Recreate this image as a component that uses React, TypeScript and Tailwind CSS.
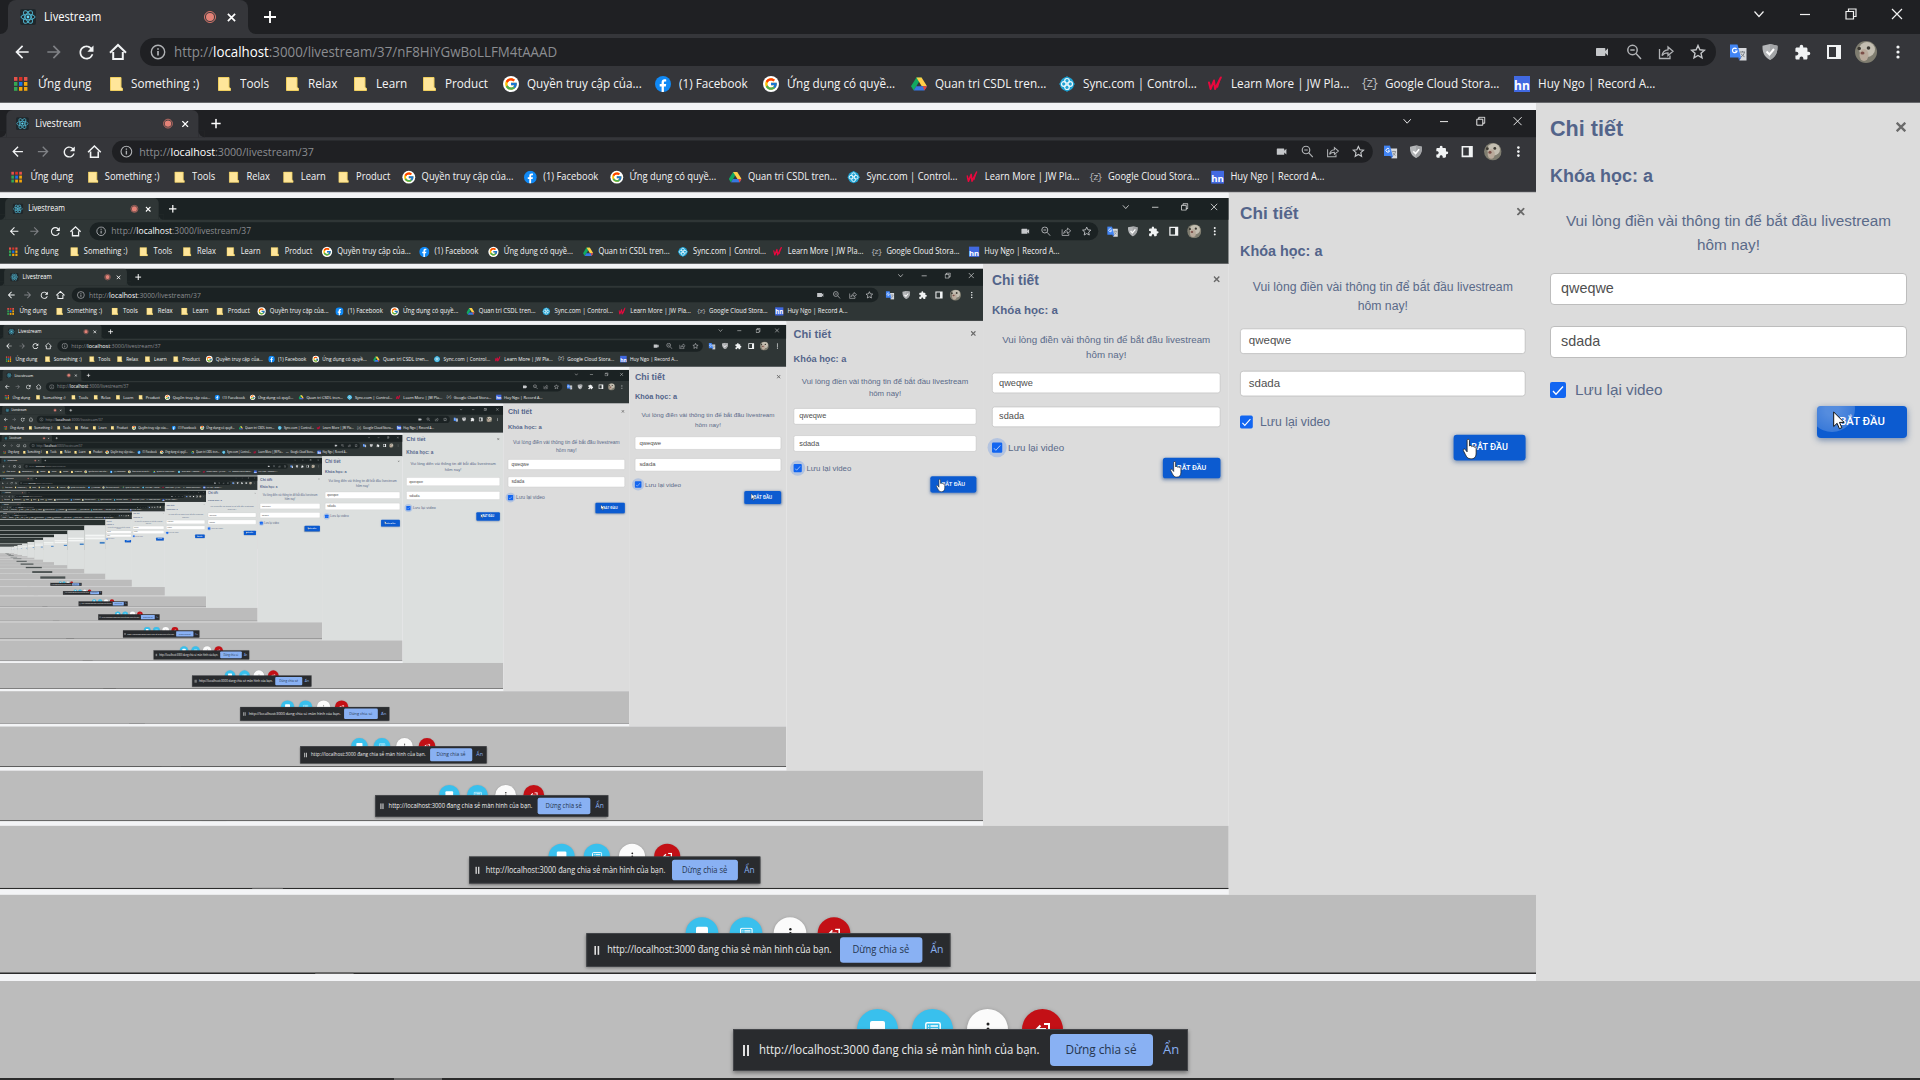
import React from "react";
import { FcGoogle } from "react-icons/fc";
import { MdExtension, MdVideocam, MdArrowBack, MdArrowForward, MdRefresh } from "react-icons/md";

const DETAILED_LEVELS = 12;
const LAST_LEVEL = 22;

const ReactLogo = () => (
  <span className="flex size-4 items-center justify-center rounded-[2px] bg-[#20272b]">
    <svg viewBox="0 0 16 16" className="size-4" fill="none" stroke="#4fb3cd" strokeWidth="1">
      <ellipse cx="8" cy="8" rx="7" ry="2.8" />
      <ellipse cx="8" cy="8" rx="7" ry="2.8" transform="rotate(60 8 8)" />
      <ellipse cx="8" cy="8" rx="7" ry="2.8" transform="rotate(120 8 8)" />
      <circle cx="8" cy="8" r="1.4" fill="#61dafb" stroke="none" />
    </svg>
  </span>
);

const AppsIcon = () => (
  <svg viewBox="0 0 14 14" className="h-[14px] w-[14px]">
    {["#e5534b", "#d93025", "#e5534b", "#34a853", "#1a73e8", "#f2a60c", "#34a853", "#f2a60c", "#f2a60c"].map((c, i) => (
      <rect key={i} x={(i % 3) * 5} y={Math.floor(i / 3) * 5} width="3.4" height="3.8" fill={c} />
    ))}
  </svg>
);

const Folder = () => (
  <svg viewBox="0 0 13 14" className="h-[14px] w-[13px]">
    <path d="M0.5 0.5h10.5v10l1.5 0.8v2.2h-12z" fill="#ffe69a" stroke="#f0cf5e" strokeWidth="1" />
  </svg>
);

const Facebook = () => (
  <svg viewBox="0 0 16 16" className="size-4">
    <circle cx="8" cy="8" r="8" fill="#1089f5" />
    <path d="M8.9 16v-5.6h1.9l.4-2.3H8.9V6.7c0-.7.3-1.2 1.3-1.2h1V3.4c-.2 0-.9-.1-1.6-.1-1.8 0-3 1-3 3v1.8H4.7v2.3h1.9V16z" fill="#fff" />
  </svg>
);

const GoogleG = () => (
  <span className="flex size-4 items-center justify-center rounded-full bg-white">
    <FcGoogle className="size-[14px]" />
  </span>
);

const Drive = () => (
  <svg viewBox="0 0 16 14" className="h-[14px] w-4">
    <path d="M5.4 0.5h5.2L5.2 9.6 2.7 13.5 0 9.3z" fill="#11a861" />
    <path d="M5.4 0.5h5.2L16 9.3h-5.2z" fill="#ffcf48" />
    <path d="M5.2 9.3H16l-2.6 4.2H2.7z" fill="#3777e3" />
    <path d="M11.8 9.3H16l-2.6 4.2z" fill="#ea4335" />
  </svg>
);

const Sync = () => (
  <svg viewBox="0 0 16 16" className="size-4">
    <path d="M8 0 16 8 8 16 0 8z" fill="#1fa3d4" />
    <circle cx="8" cy="8" r="7" fill="#1fa3d4" />
    <g fill="none" stroke="#e9f7fc" strokeWidth="1.2">
      <circle cx="8" cy="4.8" r="2.3" />
      <circle cx="8" cy="11.2" r="2.3" />
      <circle cx="4.8" cy="8" r="2.3" />
      <circle cx="11.2" cy="8" r="2.3" />
    </g>
  </svg>
);

const JW = () => (
  <svg viewBox="0 0 14 16" className="h-4 w-[14px]" fill="none" stroke="#e8083e" strokeWidth="2" strokeLinejoin="round" strokeLinecap="round">
    <path d="M1 6.5 2.6 13 6 4.5 7 13 12.8 1.5" />
    <path d="M11.5 4 9.5 11" strokeWidth="1.4" />
  </svg>
);

const Zed = () => <span className="font-['Liberation_Mono'] text-[12px] leading-none tracking-[-2px] text-[#b9babd]">{"{z}"}</span>;

const Hn = () => (
  <span className="flex h-4 w-4 items-end justify-center bg-[#4169e1] font-['Open_Sans'] text-[12px] font-bold leading-[12px] text-white">hn</span>
);

const bookmarks: { w: string; gap: string; t: string; icon: React.ReactNode }[] = [
  { w: "w-[96px]", gap: "w-[24px]", t: "Ứng dụng", icon: <AppsIcon /> },
  { w: "w-[108px]", gap: "w-[21px]", t: "Something :)", icon: <Folder /> },
  { w: "w-[68px]", gap: "w-[22px]", t: "Tools", icon: <Folder /> },
  { w: "w-[68px]", gap: "w-[22px]", t: "Relax", icon: <Folder /> },
  { w: "w-[69px]", gap: "w-[22px]", t: "Learn", icon: <Folder /> },
  { w: "w-[80px]", gap: "w-[22px]", t: "Product", icon: <Folder /> },
  { w: "w-[152px]", gap: "w-[24px]", t: "Quyền truy cập của...", icon: <GoogleG /> },
  { w: "w-[108px]", gap: "w-[24px]", t: "(1) Facebook", icon: <Facebook /> },
  { w: "w-[148px]", gap: "w-[24px]", t: "Ứng dụng có quyề...", icon: <GoogleG /> },
  { w: "w-[148px]", gap: "w-[24px]", t: "Quan tri CSDL tren...", icon: <Drive /> },
  { w: "w-[149px]", gap: "w-[24px]", t: "Sync.com | Control...", icon: <Sync /> },
  { w: "w-[153px]", gap: "w-[23px]", t: "Learn More | JW Pla...", icon: <JW /> },
  { w: "w-[153px]", gap: "w-[24px]", t: "Google Cloud Stora...", icon: <Zed /> },
  { w: "w-[150px]", gap: "w-[24px]", t: "Huy Ngo | Record A...", icon: <Hn /> },
];

const Cell = ({ children }: { children: React.ReactNode }) => (
  <span className="flex h-8 w-8 shrink-0 items-center justify-center">{children}</span>
);

const TabStrip = ({ deep }: { deep: boolean }) => (
  <div className={`flex h-[34px] items-end ${deep ? "bg-[#1b2223]" : "bg-[#1f2023]"}`}>
    <div className={`h-2 w-2 ${deep ? "bg-[#2f3636]" : "bg-[#35363a]"}`}>
      <div className={`h-2 w-2 rounded-br-lg ${deep ? "bg-[#1b2223]" : "bg-[#1f2023]"}`} />
    </div>
    <div className={`flex h-[34px] w-[240px] items-center rounded-t-lg pl-3 ${deep ? "bg-[#2f3636]" : "bg-[#35363a]"}`}>
      <ReactLogo />
      <span className="ml-2 w-[160px] shrink-0 text-[13px] text-white">
        <span className="inline-block origin-left scale-x-[0.86]">Livestream</span>
      </span>
      <span className="mr-[11px] flex size-[12px] shrink-0 items-center justify-center rounded-full border border-[#d9776c]">
        <span className="size-2 rounded-full bg-[#e38277]" />
      </span>
      <svg viewBox="0 0 10 10" className="size-[9px]" stroke="#fff" strokeWidth="1.9">
        <path d="M1 1l8 8M9 1l-8 8" />
      </svg>
    </div>
    <div className={`h-2 w-2 ${deep ? "bg-[#2f3636]" : "bg-[#35363a]"}`}>
      <div className={`h-2 w-2 rounded-bl-lg ${deep ? "bg-[#1b2223]" : "bg-[#1f2023]"}`} />
    </div>
    <div className="flex h-[34px] w-7 items-center justify-center">
      <svg viewBox="0 0 12 12" className="size-3" stroke="#fff" strokeWidth="1.9">
        <path d="M6 0v12M0 6h12" />
      </svg>
    </div>
    <div className="ml-auto flex h-[34px] items-start pt-[6px]">
      {[
        <svg key="a" viewBox="0 0 12 12" className="size-3"><path d="M1.500 3.500l4.500 5 4.500-5" /></svg>,
        <svg key="b" viewBox="0 0 12 12" className="size-3"><path d="M1 6.500h10" /></svg>,
        <svg key="c" viewBox="0 0 12 12" className="size-3"><path d="M1 3.500h7.500v7.500h-7.500zM3.500 3.500v-2.500h7.500v7.500h-2.500" /></svg>,
        <svg key="d" viewBox="0 0 12 12" className="size-3"><path d="M1 1l10 10M11 1L1 11" /></svg>,
      ].map((icon, i) => (
        <span key={i} className="flex h-4 w-[46px] items-center justify-center fill-none stroke-[#f1f1f1] stroke-[1.2]">{icon}</span>
      ))}
    </div>
  </div>
);

const Toolbar = ({ path, deep }: { path: string; deep: boolean }) => (
  <div className="flex h-9 items-center pl-[6px] text-[#f1f3f4]">
    <Cell><MdArrowBack className="size-[20px]" /></Cell>
    <Cell><MdArrowForward className="size-[20px] text-[#7f8185]" /></Cell>
    <Cell><MdRefresh className="size-[21px]" /></Cell>
    <Cell>
      <svg viewBox="0 0 18 18" className="size-[18px]" fill="none" stroke="currentColor" strokeWidth="2">
        <path d="M4.2 9v7h9.600V9M1 9.800 9 2l8 7.800" />
      </svg>
    </Cell>
    <div className={`ml-[6px] flex h-7 flex-1 items-center rounded-full pl-[10px] pr-[2px] text-[#9aa0a6] ${deep ? "bg-[#1b2223]" : "bg-[#1f2023]"}`}>
      <svg viewBox="0 0 16 16" className="size-4" fill="none" stroke="#b0b2b5" strokeWidth="1.400">
        <circle cx="8" cy="8" r="6.700" />
        <path d="M8 7v4.500M8 4.200v1.600" strokeWidth="1.700" />
      </svg>
      <span className="ml-2 flex-1 whitespace-nowrap text-[14.5px] text-[#8b8d91]">
        <span className="inline-block origin-left scale-x-[0.918]">
          http://<span className="text-white">localhost</span>:3000/livestream/{path}
        </span>
      </span>
      <Cell><MdVideocam className="size-[16px] text-[#c5c7ca]" /></Cell>
      <Cell>
        <svg viewBox="0 0 16 16" className="size-4" fill="none" stroke="#b0b2b5" strokeWidth="1.500">
          <circle cx="6.500" cy="6" r="4.700" /><path d="M10 9.500l5 5.500M4.300 6h4.400" />
        </svg>
      </Cell>
      <Cell>
        <svg viewBox="0 0 16 16" className="size-4" fill="none" stroke="#b0b2b5" strokeWidth="1.300">
          <path d="M1.500 5v9.500h10.500V11.500M4 11.500c.5-3.500 2.500-5.500 6-5.700V3l5 4.300-5 4.200V8.800c-2.500 0-4.500.7-6 2.700z" />
        </svg>
      </Cell>
      <Cell>
        <svg viewBox="0 0 16 16" className="size-4" fill="none" stroke="#c5c7ca" strokeWidth="1.400">
          <path d="M8 1.500l1.900 4.300 4.600.4-3.500 3.100 1 4.600L8 11.500l-4 2.400 1-4.600L1.500 6.200l4.600-.4z" />
        </svg>
      </Cell>
    </div>
    <div className="flex items-center pl-[6px] pr-[6px]">
      <Cell>
        <svg viewBox="0 0 17 17" className="size-[17px]">
          <path d="M6 4h10.500v12.500h-7z" fill="#d8dadd" />
          <path d="M10 8h5M12.500 7v1.200M14.500 8c-.5 2.500-2 4-3.500 5M11 9.500c.7 1.500 2 2.600 3.500 3.200" stroke="#7d8286" strokeWidth="1" fill="none" />
          <path d="M0 .5h7.500L11 13.500H0z" fill="#4285f4" />
          <path d="M8 13.500h3.300l-2 3z" fill="#2f63c9" />
          <path d="M6.600 5A2.300 2.300 0 1 0 7 7H4.900" stroke="#fff" strokeWidth="1.200" fill="none" />
        </svg>
      </Cell>
      <Cell>
        <svg viewBox="0 0 16 16" className="size-4">
          <path d="M8 0l7.500 1.800c.3 6-1.500 11-7.500 14.200C2 12.800.2 7.800.5 1.800z" fill="#b4b6b8" />
          <path d="M8 0l7.500 1.800c.3 6-1.500 11-7.500 14.200z" fill="#a3a5a7" />
          <path d="M4.500 7.500l3 3 4.500-5.500" stroke="#fff" strokeWidth="2" fill="none" />
        </svg>
      </Cell>
      <Cell><MdExtension className="size-[17px]" /></Cell>
      <Cell>
        <span className="h-[14px] w-[14px] border-2 border-r-[5px] border-[#f1f3f4]" />
      </Cell>
      <Cell>
        <svg viewBox="0 0 22 22" className="size-[22px]">
          <circle cx="11" cy="11" r="11" fill="#7f7d70" />
          <ellipse cx="12" cy="8.500" rx="8" ry="7.500" fill="#c3beb1" />
          <ellipse cx="9" cy="14" rx="4.500" ry="6" fill="#b9aa9b" />
          <circle cx="4.200" cy="7.500" r="1.800" fill="#3d3a33" />
          <circle cx="13.500" cy="7" r="1.800" fill="#3d3a33" />
          <ellipse cx="7.500" cy="12" rx="2" ry="1.600" fill="#7b4f48" />
        </svg>
      </Cell>
      <Cell>
        <svg viewBox="0 0 4 14" className="h-[14px] w-1 fill-[#f1f3f4]">
          <circle cx="2" cy="2" r="1.600" /><circle cx="2" cy="7" r="1.600" /><circle cx="2" cy="12" r="1.600" />
        </svg>
      </Cell>
    </div>
  </div>
);

const Bookmarks = () => (
  <div className="flex h-7 items-center pl-[14px] text-[13px] text-[#f4f4f5]">
    {bookmarks.map((b) => (
      <span key={b.t} className={`flex shrink-0 items-center whitespace-nowrap ${b.w}`}>
        <span className={`flex shrink-0 ${b.gap}`}>{b.icon}</span>
        <span className="inline-block origin-left scale-x-90">{b.t}</span>
      </span>
    ))}
  </div>
);

const Arrow = () => (
  <svg viewBox="0 0 12 19" className="absolute left-4 top-[5px] h-[19px] w-3">
    <path d="M.7 1v14.500l3.400-3.200 2.300 5.400 2.400-1-2.300-5.300h4.600z" fill="#fff" stroke="#111" strokeWidth="1" />
  </svg>
);

const Hand = () => (
  <svg viewBox="0 0 17 22" className="absolute left-[11px] top-[5px] h-[26px] w-[20px]">
    <path
      d="M5 1.700c0-1.600 2.500-1.600 2.500 0v6c.4-1 2.400-.9 2.500.5.500-.9 2.300-.7 2.400.7.700-.7 2.200-.3 2.200 1v5c0 4-1.600 6.400-5.400 6.400-3.600 0-4.700-2-6-4.600L1 12.500c-.6-1.400 1-2.400 2-1.200l2 2.500z"
      fill="#fff" stroke="#222" strokeWidth="0.900"
    />
  </svg>
);

const Panel = ({ level }: { level: number }) => (
  <div className={`w-[384px] shrink-0 pl-[14px] pr-[13px] font-['Liberation_Sans'] text-[#53648a] ${level > 5 ? "bg-[#dcdfde]" : "bg-[#dcdcdc]"}`}>
    <div className="flex h-[52px] items-center justify-between">
      <h2 className="text-[21.600px] font-bold">Chi tiết</h2>
      <svg viewBox="0 0 10 10" className="mb-[4px] mr-px size-[10px]" stroke="#6a6a6a" strokeWidth="2.300">
        <path d="M.7.700l8.600 8.600M9.300.700L.7 9.300" />
      </svg>
    </div>
    <h3 className="mt-[9px] text-[18px] font-bold leading-6">Khóa học: a</h3>
    <p className="mt-[21px] text-center text-[15.300px] leading-6 text-[#5a6a89]">
      Vui lòng điền vài thông tin để bắt đầu livestream hôm nay!
    </p>
    <div className="mt-4 flex h-8 items-center rounded border border-[#bdbdbd] bg-white px-[10px] text-[14.400px] text-[#4f4f4f]">qweqwe</div>
    <div className="mt-[21px] flex h-8 items-center rounded border border-[#bdbdbd] bg-white px-[10px] text-[14.400px] text-[#4f4f4f]">sdada</div>
    <div className="mt-[23px] flex h-[18px] items-center">
      <span className="relative flex size-4 items-center justify-center rounded-[2px] bg-[#1266f1]">
        {level > 1 && <span className="absolute -inset-[7px] rounded-full bg-[#1266f1]/20" />}
        <svg viewBox="0 0 12 12" className="size-3" fill="none" stroke="#fff" strokeWidth="1.300">
          <path d="M1 7l3 3.200L11 2.500" />
        </svg>
      </span>
      <span className="ml-[9px] text-[15.300px] text-[#5a6a89]">Lưu lại video</span>
    </div>
    <div className="relative ml-auto mt-[7px] flex h-8 w-[90px] items-center justify-center rounded bg-[#0c5bd0] font-['Roboto'] text-[11.300px] font-medium text-white shadow-[0_2px_6px_rgba(40,80,140,0.6)]">
      {level === 0 && (
        <span className="absolute inset-0 overflow-hidden rounded">
          <span className="absolute -left-2 -top-5 size-[46px] rounded-full bg-[radial-gradient(circle,rgba(255,255,255,0.3)_20%,rgba(255,255,255,0.12)_100%)]" />
        </span>
      )}
      <span className="relative pt-px">BẮT ĐẦU</span>
      {level === 0 || level > 3 ? <Arrow /> : <Hand />}
    </div>
  </div>
);

const circle = "flex size-[41px] justify-center rounded-full pt-[12px] shadow-[0_1px_4px_rgba(0,0,0,0.25)]";

const Controls = () => (
  <div className="flex h-[97px] items-start justify-center gap-[14px] bg-[#bcbcbc] pt-7">
    <span className={`${circle} bg-[#39c0ed]`}><span className="h-4 w-[15px] rounded-[2px] bg-white" /></span>
    <span className={`${circle} bg-[#39c0ed]`}>
      <svg viewBox="0 0 16 14" className="mt-px h-[14px] w-4" fill="none" stroke="#fff" strokeWidth="1.500">
        <rect x=".8" y=".8" width="14.400" height="12" rx="1.500" />
        <path d="M3 4h1.200M5.500 4h7.500M3 7h1.200M5.500 7h7.500" />
      </svg>
    </span>
    <span className={`${circle} bg-[#fbfbfb]`}>
      <svg viewBox="0 0 4 16" className="mt-px h-4 w-1 fill-[#222]">
        <circle cx="2" cy="2" r="1.500" /><circle cx="2" cy="7" r="1.500" /><circle cx="2" cy="12" r="1.500" />
      </svg>
    </span>
    <span className={`${circle} bg-[#c31016]`}>
      <svg viewBox="0 0 16 14" className="mt-[2px] h-[14px] w-4" fill="none" stroke="#fff" strokeWidth="2">
        <path d="M9 1h5v10H9M11 6H2M5.500 2.500 2 6l3.500 3.500" />
      </svg>
    </span>
  </div>
);

const ShareBar = () => (
  <div className="absolute left-[733px] top-[1029px] flex h-[42px] w-[455px] items-center whitespace-nowrap border border-[#44464a] bg-[#292b2e] text-[13px] shadow-[0_2px_4px_rgba(0,0,0,0.4)]">
    <span className="ml-[9px] h-[11px] w-[6px] shrink-0 border-x-2 border-[#e0e0e0]" />
    <span className="ml-[10px] w-[291px] shrink-0 pb-px text-[#ececec]">
      <span className="inline-block origin-left scale-x-[0.876]">http://localhost:3000 đang chia sẻ màn hình của bạn.</span>
    </span>
    <span className="flex h-8 w-[103px] shrink-0 items-center justify-center rounded bg-[#89b1f3] text-[#25364f]">
      <span className="inline-block scale-x-[0.91] pb-px">Dừng chia sẻ</span>
    </span>
    <span className="ml-[10px] pb-px text-[#8ab0f0]">Ẩn</span>
  </div>
);

/* Far recursion levels: only a few pixels tall, so just their main blocks of colour. */
const FarScreen = ({ level }: { level: number }) => (
  <div className="relative flex h-[1080px] w-[1920px] flex-col overflow-hidden">
    <div className="h-[103px] shrink-0 bg-[#28302f]" />
    <div className="flex h-[878px] shrink-0">
      <div className="flex w-[1536px] shrink-0 items-center bg-linear-to-b from-[#3a4442] from-50% to-[#c4c4c4] to-50%">
        <div className="h-[864px] w-[1536px] overflow-hidden bg-[#dcdfde]">
          {level < LAST_LEVEL && (
            <div className="h-[1080px] w-[1920px] origin-top-left scale-80">
              <FarScreen level={level + 1} />
            </div>
          )}
        </div>
      </div>
      <div className="w-[384px] bg-[#dcdfde] px-4 pt-[168px]">
        <div className="h-8 bg-[#f4f6f5]" />
        <div className="mt-5 h-8 bg-[#f4f6f5]" />
        <div className="ml-auto mt-12 h-8 w-[90px] bg-[#3f7fc4]" />
      </div>
    </div>
    <div className="flex h-[99px] items-end justify-center bg-[#bcbcbc] pb-2">
      <div className="h-[42px] w-[455px] bg-[#4b5252]" />
    </div>
  </div>
);

const Screen = ({ level }: { level: number }) => {
  const deep = level > 1;
  return (
    <div className="relative flex h-[1080px] w-[1920px] flex-col overflow-hidden bg-[#f4f4f6] font-['Open_Sans',sans-serif]">
      <div className={`h-[103px] shrink-0 border-b border-[#66686b] ${deep ? "bg-[#2f3636]" : "bg-[#35363a]"}`}>
        <TabStrip deep={deep} />
        <Toolbar path={level === 0 ? "37/nF8HiYGwBoLLFM4tAAAD" : "37"} deep={deep} />
        <Bookmarks />
      </div>
      <div className="flex h-[878px] shrink-0">
        <div className={`flex w-[1536px] shrink-0 items-center ${level > 6 ? "bg-linear-to-b from-[#7d8583] from-50% to-[#cacaca] to-50%" : "bg-[#f3f4f6]"}`}>
          <div className="h-[864px] w-[1536px] overflow-hidden bg-[#dcdcdc]">
            <div className="h-[1080px] w-[1920px] origin-top-left scale-80">
              {level < DETAILED_LEVELS ? <Screen level={level + 1} /> : <FarScreen level={level + 1} />}
            </div>
          </div>
        </div>
        <Panel level={level} />
      </div>
      <Controls />
      <div className="h-[2px] shrink-0 bg-[#2b2b2b] pl-[394px]">
        <div className="h-[2px] w-12 bg-[#666]" />
      </div>
      <ShareBar />
    </div>
  );
};

export default function App() {
  return <Screen level={0} />;
}
